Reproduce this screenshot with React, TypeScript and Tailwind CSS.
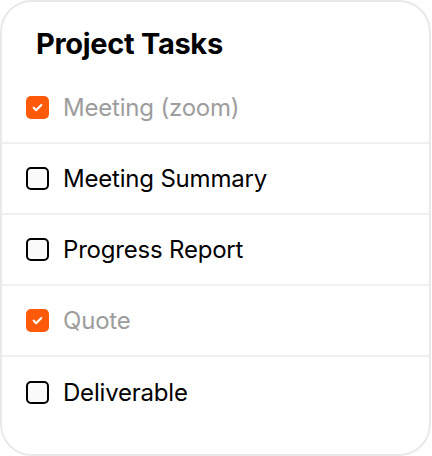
const TASKS = [
  { label: "Meeting (zoom)", done: true },
  { label: "Meeting Summary", done: false },
  { label: "Progress Report", done: false },
  { label: "Quote", done: true },
  { label: "Deliverable", done: false },
];

function Check({ done }: { done: boolean }) {
  if (done) {
    return (
      <span className="flex h-[23px] w-[23px] shrink-0 items-center justify-center rounded-[5px] bg-[#ff5a0a]">
        <svg width="13" height="13" viewBox="0 0 24 24" fill="none" stroke="white" strokeWidth="4" strokeLinecap="round" strokeLinejoin="round">
          <path d="M5 12.5l4.5 4.5L19 7.5" />
        </svg>
      </span>
    );
  }
  return <span className="h-[23px] w-[23px] shrink-0 rounded-[5px] border-2 border-black bg-[#fafafa]" />;
}

export default function App() {
  return (
    <div className="h-[456px] w-[432px] bg-white" style={{ fontFamily: "Inter, 'Noto Sans', sans-serif" }}>
      <div className="flex h-[456px] w-[431px] flex-col overflow-hidden rounded-[32px] border-2 border-[#e9e9e9] bg-white">
        <div className="flex h-[71px] items-center px-[34px] pt-[12px]">
          <h1 className="text-[29px] font-bold tracking-[-0.3px] text-black">Project Tasks</h1>
        </div>
        {TASKS.map((t, i) => (
          <div
            key={t.label}
            className={`flex h-[71px] items-center gap-[14px] px-[24px] ${i < TASKS.length - 1 ? "border-b-2 border-[#f0f0f0]" : ""}`}
          >
            <Check done={t.done} />
            <span className={`text-[24px] tracking-[-0.2px] ${t.done ? "text-[#9d9d9d]" : "text-black"}`}>{t.label}</span>
          </div>
        ))}
      </div>
    </div>
  );
}
